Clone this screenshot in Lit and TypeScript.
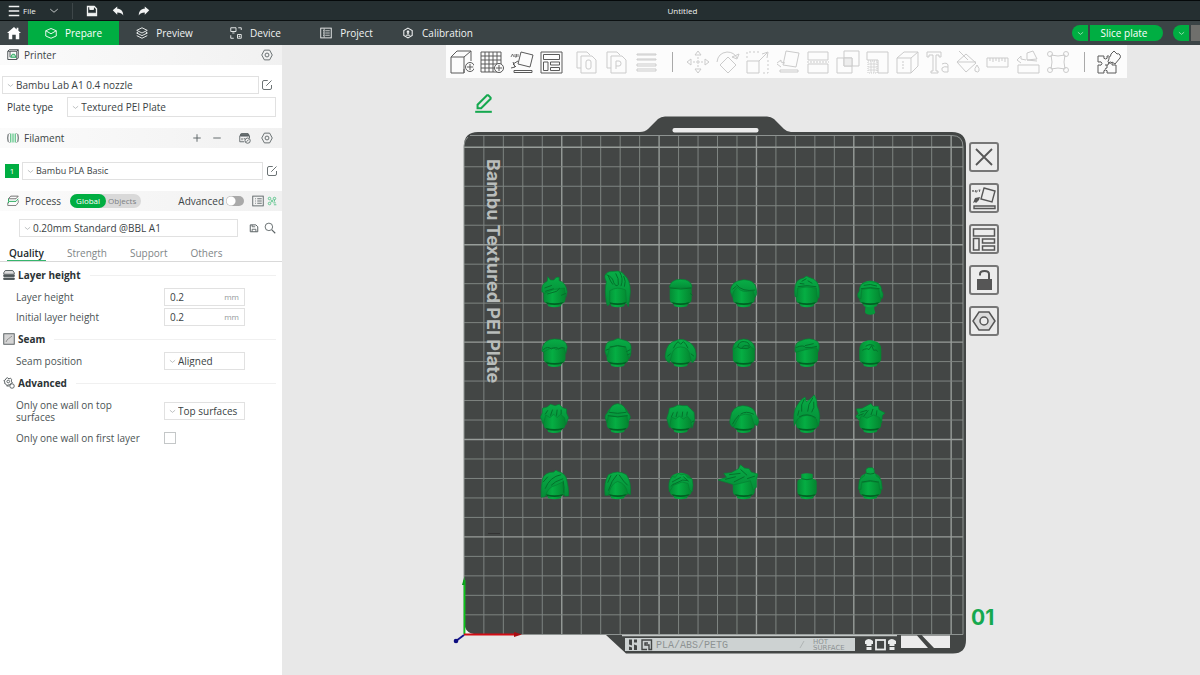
import { LitElement, html, svg, css, nothing, TemplateResult } from "lit";
import { customElement, state } from "lit/decorators.js";
import { classMap } from "lit/directives/class-map.js";

/* ---------- icons ---------- */

const ICONS: Record<string, TemplateResult> = {
  menu: svg`<path d="M1 2h14M1 8h14M1 14h14" stroke-width="1.8"/>`,
  chevron: svg`<path d="M2 5l6 5 6-5"/>`,
  save: svg`<path d="M2 2h9l3 3v9H2z" stroke-width="1.8"/><path d="M5 2v4h5V2z" fill="currentColor"/><path d="M3 11h10v3H3z" fill="currentColor"/>`,
  saveLine: svg`<path d="M2 3h9l3 3v8H2z" stroke-width="1.6"/><path d="M5 3v3h5M5 14v-4h6v4" stroke-width="1.4"/>`,
  undo: svg`<path d="M1 7l6-5v3c5 0 8 3 8 9-2-3-4-4-8-4v3z" fill="currentColor" stroke="none"/>`,
  redo: svg`<path d="M15 7L9 2v3c-5 0-8 3-8 9 2-3 4-4 8-4v3z" fill="currentColor" stroke="none"/>`,
  home: svg`<path d="M8 1L0 8h2v7h4v-5h4v5h4V8h2l-3-2.600V2h-2v2z" fill="currentColor" stroke="none"/>`,
  prepare: svg`<path d="M8 2l7 3v7l-7 3-7-3V5z"/><path d="M1 5l7 4 7-4"/>`,
  preview: svg`<path d="M8 1l7 3.500L8 8 1 4.500z"/><path d="M1 8l7 3.500L15 8M1 11.500L8 15l7-3.500M3 6.500L1 8l2 1M13 6.500L15 8l-2 1"/>`,
  device: svg`<path d="M1 1h7v5H1zM3 8h3M10 10h5v5h-5zM12 12h1v1h-1z"/><path d="M11 1h4v3M1 11v4h4"/>`,
  project: svg`<rect x="1" y="1.500" width="14" height="13"/><path d="M4 5h1.500M7 5h6M4 8h1.500M7 8h6M4 11h1.500M7 11h6M5.500 2v12" stroke-width="1"/>`,
  calibration: svg`<path d="M8 1.500l5.600 3.200v6.600L8 14.500l-5.600-3.200V4.700z" stroke-width="1.400"/><path d="M8 4l2.500 3h-1.500v3H7V7H5.500z" fill="currentColor" stroke="none"/><path d="M5 11h6"/>`,
  nut: svg`<path d="M4.500 1.500h7L15 8l-3.500 6.500h-7L1 8z"/><circle cx="8" cy="8" r="2.600"/>`,
  printer: svg`<path d="M1 3l2-2h12v11l-2 2H1z"/><path d="M4 3v8M15 1l-2 2v11M1 3h12"/><path d="M5 11l2-4h3l2 4z" stroke="#18a552" fill="#b9e3c9"/>`,
  spool: svg`<path d="M3 2Q1 2 1 8t2 6M13 2q2 0 2 6t-2 6"/><path d="M5 2v12M8 2v12M11 2v12" stroke="#4fbf7c" stroke-width="1.500"/>`,
  plus: svg`<path d="M8 2v12M2 8h12" stroke-width="1.500"/>`,
  minus: svg`<path d="M2 8h12" stroke-width="1.500"/>`,
  ams: svg`<path d="M3 2h9l1 3H2zM1 5h13v3M1 5v8h6M4 8v3M7 8v2"/><path d="M2 3h11v2H2z" fill="currentColor"/><circle cx="11.500" cy="11.500" r="3.500"/><path d="M10 13l3-3"/>`,
  edit: svg`<path d="M9 2H4Q2 2 2 4v8q0 2 2 2h8q2 0 2-2V8"/><path d="M7 9l7-7"/>`,
  layers: svg`<path d="M5 1.500h10l-3 3.500H2z" stroke="#666"/><path d="M2 5v3.500h10L15 5M2 9v2" stroke="#18a552"/><path d="M1 10v4h11l3-4V7" stroke="#777"/>`,
  list: svg`<rect x="1" y="1.500" width="14" height="13"/><path d="M4 5h1M7 5h6M4 8h1M7 8h6M4 11h1M7 11h6"/>`,
  nodes: svg`<g stroke="#3cba76"><circle cx="4" cy="4" r="2"/><circle cx="12" cy="4" r="2"/><circle cx="8" cy="8" r="1.500"/><circle cx="4" cy="12" r="2"/><path d="M10 11h4M11 14h4M12 6v3"/></g>`,
  search: svg`<circle cx="6.500" cy="6.500" r="5"/><path d="M10.500 10.500L15 15" stroke-width="1.500"/>`,
  stack: svg`<path d="M3 2h10l2 3v2H1V5z" fill="#ddd"/><path d="M1 8h14v2H1zM1 12h14v2H1z" fill="currentColor"/>`,
  seam: svg`<rect x="1" y="1" width="14" height="14" fill="#d5d5d5"/><path d="M4 12c1-4 5-5 8-8" stroke="#888"/>`,
  gears: svg`<path d="M6 1l2 1.500 2-1 1.500 2-.5 2 1.500 2-2 1-1 2H7l-2 1-1-2-2-1 .5-2L1 5l2-1 1-2z"/><circle cx="7" cy="6" r="1.800"/><circle cx="12" cy="12" r="3"/><path d="M8 12H5"/>`,
  pencil: svg`<path d="M3 12V9l8-8h1l2 2v1l-8 8z" stroke-width="1.700"/><path d="M1 15h14" stroke-width="1.700"/>`,
};

/* Toolbar artwork, drawn on a 24-unit grid. */
const TOOLS: Record<string, TemplateResult> = {
  addCube: svg`<path d="M1 7h13v16H1zM1 7l6-6h14l-7 6M21 1v10M14 23v-4"/><circle cx="20" cy="17" r="4.500" fill="#fcfcfc"/><path d="M20 14v6M17 17h6"/>`,
  addPlate: svg`<path d="M1 2h20v20H1zM5 2v20M9 2v20M13 2v20M17 2v20M1 6h20M1 10h20M1 14h20M1 18h20"/><circle cx="19" cy="18" r="4.500" fill="#fcfcfc"/><path d="M19 15v6M16 18h6"/>`,
  orient: svg`<path d="M11 2l12 3-3 12-12-3zM4 20.500h18v2H4z"/><path d="M1 7l1.500-3L4 7M5 4v3h1.500V4M8 4v3" stroke-width=".8"/><path d="M8 11L3 14l3 3M1 18l4-1-2-5"/>`,
  arrange: svg`<path d="M1 2h21v21H1zM3.500 4.500h16v5h-16zM3.500 12h4.500v8.500H3.500zM10.500 12h9v3h-9zM10.500 17.500h9v3h-9z"/>`,
  copy: svg`<path d="M6 18H2V2h10l3 3"/><path d="M6 6h11l4 4v13H6z"/><rect x="11" y="10" width="5" height="9" rx="2"/>`,
  paste: svg`<path d="M6 18H2V2h10l3 3"/><path d="M6 6h11l4 4v13H6z"/><path d="M11 19v-8h3q2 0 2 2.500T14 16h-3"/>`,
  lines: svg`<path d="M2 4h19v1H2zM2 9h19v1H2zM2 14h19v2H2zM2 19h19v2H2z"/>`,
  move: svg`<path d="M12 1l3 4h-6zM12 23l3-4h-6zM1 12l4-3v6zM23 12l-4-3v6z"/><circle cx="12" cy="12" r="1.200"/><path d="M12 7v2M12 15v2M7 12h2M15 12h2"/>`,
  rotate: svg`<path d="M12 7l8 8-8 8-8-8z"/><path d="M1 12Q2 3 11 2q7 0 10 6M23 4l-2 5-5-2z"/>`,
  scale: svg`<path d="M1 11h12v12H1zM13 11l8-8M16 4l6-2-1 6"/><path d="M1 8V2h12M22 10v13h-7" stroke-dasharray="2 2"/>`,
  lay: svg`<path d="M10 1l13 2-3 14-13-2zM4 20h18v2H4zM1 13l4-3v2l4 1M1 14l4 3"/>`,
  cut: svg`<path d="M2 2h20v8H2zM2 14h20v9H2z"/><path d="M1 12h22" stroke-dasharray="2 1"/>`,
  bool: svg`<path d="M1 8h15v15H1zM8 1h15v15H8z"/><path d="M8 8h8v8H8z" fill="#ededed"/>`,
  support: svg`<path d="M1 2h21v21H12V10H1z"/><path d="M2 11h9v12H2z" stroke-dasharray="1 1"/><path d="M2 14h9M2 17h9M2 20h9M5 11v12M8 11v12" stroke-width=".7"/>`,
  cube: svg`<path d="M1 8h14v15H1zM1 8l7-6h14v14l-7 7M15 8l7-6"/><path d="M7 11v9" stroke-dasharray="2 1"/>`,
  text: svg`<path d="M1 2h14v5h-2V5h-3v16h2v2H5v-2h2V5H3v2H1z"/><path d="M16 14q5-2 6 1v7h-4q-3-1-2-4 2-2 6-1"/>`,
  paint: svg`<path d="M3 1l9 9M10 4l10 9-10 9-9-10z"/><path d="M1 12h19M21 15q3 4 2 6t-4 0q-1-2 2-6z"/>`,
  measure: svg`<path d="M1 8h21v9H1zM4 8v3M7 8v4M10 8v3M13 8v4M16 8v3M19 8v4"/>`,
  assemble: svg`<path d="M2 15h21v8H2zM11 3l6-2 4 8-10 1zM1 10l4-4v3l5 1M1 10l4 3M11 10l10 1"/>`,
  mesh: svg`<path d="M5 5q7 2 14 0-2 7 0 14-7-2-14 0 2-7 0-14z"/><circle cx="4" cy="4" r="2.500"/><circle cx="20" cy="4" r="2.500"/><circle cx="4" cy="20" r="2.500"/><circle cx="20" cy="20" r="2.500"/>`,
  puzzle: svg`<path d="M1 6h6q-1 3 1.500 3T10 6h2M1 6v6q4-1 4 1.500T1 15v8h6q-1-3 1.500-3t1.500 3h9v-8h-4q1-3-1.500-3T11 15H8M10 15v3q-2 0-2 1.500"/><path d="M12 7q2 0 2-3l3-3 3 3q2-1 3 1t0 3l-5 6-3-2q-1 2-3 1t0-4z"/>`,
  close: svg`<path d="M4 4l16 16M20 4L4 20" stroke-width="1.800"/>`,
  orientPlate: svg`<path d="M12 2l11 3-3 11-11-3zM2 20h21v2.500H2z" stroke-width="1.400"/><path d="M0 6l1-2 1 2M3.500 4v2H5V4M6.500 4h2M7.500 4v2" stroke-width=".8"/><path d="M8 11l-5 1-2 5 2-1 1 1 3-3z" fill="currentColor" stroke="none"/>`,
  arrangePlate: svg`<path d="M1.500 2h21v7h-21zM1.500 11.500h5.500V23H1.500zM10.500 12h12v4h-12zM10.500 19h12v4h-12z" stroke-width="1.500"/>`,
  lock: svg`<path d="M5 11h15v11H5z" fill="currentColor" stroke="none"/><path d="M8 7.500V6q0-3 4.500-3T17 6v5" stroke-width="2"/>`,
  plateNut: svg`<path d="M7 3h10l6 9-6 9H7L1 12z" stroke-width="1.500" fill="#dcdcdc"/><circle cx="12" cy="12" r="4" stroke-width="1.500" fill="#ececec"/>`,
};

const icon = (name: string, size = 12) => html`<svg
  width=${size} height=${size} viewBox="0 0 16 16" fill="none" stroke="currentColor"
  stroke-width="1.2" aria-hidden="true">${ICONS[name]}</svg>`;

const tool = (name: string, size = 24) => html`<svg
  width=${size} height=${size} viewBox="0 0 24 24" fill="none" stroke="currentColor"
  stroke-width="1" aria-hidden="true">${TOOLS[name]}</svg>`;

const reset = css`
  * { box-sizing: border-box; }
  svg { display: block; flex: none; }
  button {
    border: 0; padding: 0; margin: 0; background: none; color: inherit; font: inherit;
    display: inline-flex; align-items: center; justify-content: center; cursor: pointer;
  }
`;

/* ---------- header ---------- */

@customElement("app-header")
class AppHeader extends LitElement {
  @state() private tab = "Prepare";

  static styles = [reset, css`
    :host { display: block; color: #f1f3f3; }
    .title {
      display: grid; grid-template-columns: 4fr auto 3fr; align-items: center;
      height: 21px; padding: 0 8px; background: #252f31;
      border-top: 1px solid #05090a; border-bottom: 1px solid #0c1112;
      font-size: 8px; line-height: 12px;
    }
    .left { display: flex; align-items: center; }
    .file { gap: 3px; }
    .drop { margin-left: 13px; }
    .rule { width: 1px; height: 16px; margin: 0 13px 0 13px; background: #3e4749; }
    .quick { display: flex; gap: 14px; }
    .name { margin: 0; font-size: 8px; font-weight: 400; line-height: 12px; }
    .bar { display: flex; align-items: center; height: 24px; background: #3b4446; overflow: hidden; }
    .home { width: 28px; height: 24px; color: #fff; }
    .tab { width: 91px; height: 24px; gap: 8px; font-size: 10px; line-height: 14px; }
    .tab.on { background: #00ae42; color: #fff; }
    .actions { display: flex; gap: 10px; margin-left: auto; }
    .split { display: flex; gap: 2px; }
    .split button { height: 16px; background: #00ae42; color: #fff; font-size: 10px; line-height: 14px; }
    .split .more { width: 16px; border-radius: 8px 0 0 8px; }
    .split .go { width: 73px; padding-right: 5px; border-radius: 0 8px 8px 0; }
    .split .off { width: 9px; background: #6f6f6c; }
  `];

  render() {
    const tabs = [["Prepare", "prepare"], ["Preview", "preview"], ["Device", "device"], ["Project", "project"], ["Calibration", "calibration"]];
    return html`
      <header class="title">
        <div class="left">
          <button class="file">${icon("menu", 12)}File</button>
          <button class="drop" aria-label="More menus">${icon("chevron", 10)}</button>
          <span class="rule"></span>
          <div class="quick">
            <button aria-label="Save">${icon("save", 12)}</button>
            <button aria-label="Undo">${icon("undo", 12)}</button>
            <button aria-label="Redo">${icon("redo", 12)}</button>
          </div>
        </div>
        <h1 class="name">Untitled</h1>
      </header>
      <nav class="bar">
        <button class="home" aria-label="Home">${icon("home", 14)}</button>
        ${tabs.map(([label, glyph]) => html`<button
          class=${classMap({ tab: true, on: this.tab === label })}
          @click=${() => (this.tab = label)}>${icon(glyph, 12)}${label}</button>`)}
        <div class="actions">
          <div class="split">
            <button class="more" aria-label="Slice options">${icon("chevron", 7)}</button>
            <button class="go">Slice plate</button>
          </div>
          <div class="split">
            <button class="more" aria-label="Print options">${icon("chevron", 7)}</button>
            <button class="off" aria-label="Print plate" disabled></button>
          </div>
        </div>
      </nav>`;
  }
}

/* ---------- settings panel ---------- */

@customElement("settings-panel")
class SettingsPanel extends LitElement {
  @state() private page = "Quality";

  static styles = [reset, css`
    :host { display: block; width: 282px; flex: none; background: #fff; color: #323a3c; font-size: 10px; line-height: 14px; }
    .head {
      display: flex; align-items: center; height: 20px; padding: 0 9px 0 7px; gap: 5px;
      background: linear-gradient(90deg, #fbfbfb, #f1f1f1); color: #3c4446;
    }
    .head h2 { margin: 0; font-size: 10px; font-weight: 400; line-height: 14px; }
    .head .end { display: flex; align-items: center; gap: 10px; margin-left: auto; }
    .head .tight { gap: 3px; margin-right: -4px; }
    .head button, .line button { color: #5b6365; }
    .head .ams { margin-left: 7px; }
    .filament { margin-top: 11px; }
    .process { margin-top: 11px; gap: 6px; }
    .line { display: flex; align-items: center; gap: 2px; }
    .printer { margin-top: 11px; padding: 0 9px 0 2px; }
    .plate { margin-top: 3px; padding: 0 6px 0 7px; gap: 14px; }
    .material { margin-top: 14px; padding: 0 4px 0 5px; gap: 3px; font-size: 9px; }
    .preset { margin-top: 8px; padding: 0 6px 0 19px; gap: 5px; }
    .preset button:first-of-type { margin-left: 6px; }
    .pick {
      display: flex; flex: 1; align-items: center; gap: 2px; height: 18px; padding: 0 4px;
      border: 1px solid #e1e1e1; color: #868c8e;
    }
    .plate .pick { height: 20px; }
    .pick select {
      flex: 1; min-width: 0; appearance: none; border: 0; padding: 0; margin: 0; background: none;
      color: #3a4244; font: inherit; text-overflow: clip;
    }
    .line .swatch { width: 14px; height: 14px; background: #00ae42; color: #fff; font-size: 8px; }
    .head .scope { display: flex; margin-left: 3px; border-radius: 7px; background: #d9d9d9; font-size: 8px; line-height: 14px; }
    .head .scope button { padding: 0 5px 0 2px; height: 14px; color: #7b8082; line-height: 14px; }
    .head .scope .on { padding: 0 6px; border-radius: 7px; background: #00ae42; color: #fff; }
    .switch { display: flex; align-items: center; gap: 2px; margin-right: 5px; }
    .switch input {
      appearance: none; width: 18px; height: 10px; margin: 0; border-radius: 5px;
      background: radial-gradient(circle at 5px 5px, #fff 4px, #a9a9a9 5px);
    }
    .pages { display: flex; align-items: stretch; height: 25px; padding-left: 7px; gap: 19px; border-bottom: 1px solid #d9d9d9; }
    .pages button { padding: 9px 2px 0; height: 24px; border-bottom: 1px solid transparent; color: #808587; line-height: 14px; }
    .pages .on { border-color: #35b56c; color: #222a2c; font-weight: 600; }
    .group { display: flex; align-items: center; gap: 3px; height: 18px; margin: 4px 0; padding: 0 6px 0 3px; color: #50585a; }
    .group h3 { margin: 0; font-size: 10px; font-weight: 700; line-height: 14px; color: #2b3335; }
    .group::after { content: ""; flex: 1; height: 1px; margin-left: 6px; background: #f0f0f0; }
    .rows { display: grid; gap: 2px; }
    .rows.loose { gap: 6px; padding-top: 3px; }
    .row { display: grid; grid-template-columns: 128px 81px; gap: 20px; align-items: center; min-height: 18px; padding-left: 16px; line-height: 12px; color: #4b5355; }
    .row label { width: 128px; white-space: normal; }
    .row .wide { white-space: nowrap; }
    .num { display: flex; align-items: center; height: 18px; padding: 0 5px; border: 1px solid #e1e1e1; color: #93989a; font-size: 8px; }
    .num input { flex: 1; min-width: 0; border: 0; padding: 0; background: none; font: inherit; font-size: 10px; line-height: 14px; color: #3a4244; }
    .check { appearance: none; width: 12px; height: 12px; margin: 0; border: 1px solid #c4c7c8; background: #fff; }
  `];

  private pick(id: string, value: string, label?: string) {
    return html`<div class="pick">${icon("chevron", 7)}
      <select id=${id} aria-label=${label ?? nothing}><option>${value}</option></select></div>`;
  }

  private num(id: string, label: string) {
    return html`<div class="row"><label for=${id}>${label}</label>
      <div class="num"><input id=${id} type="text" value="0.2">mm</div></div>`;
  }

  render() {
    return html`
      <section>
        <div class="head">${icon("printer", 12)}<h2>Printer</h2>
          <div class="end"><button aria-label="Printer settings">${icon("nut", 12)}</button></div></div>
        <div class="line printer">${this.pick("printer", "Bambu Lab A1 0.4 nozzle", "Printer")}
          <button aria-label="Edit printer">${icon("edit", 12)}</button></div>
        <div class="line plate"><label for="plate">Plate type</label>${this.pick("plate", "Textured PEI Plate")}</div>
      </section>
      <section>
        <div class="head filament">${icon("spool", 12)}<h2>Filament</h2>
          <div class="end">
            <button aria-label="Add filament">${icon("plus", 10)}</button>
            <button aria-label="Remove filament">${icon("minus", 10)}</button>
            <button class="ams" aria-label="Sync filaments">${icon("ams", 12)}</button>
            <button aria-label="Filament settings">${icon("nut", 12)}</button>
          </div></div>
        <div class="line material"><button class="swatch">1</button>${this.pick("filament", "Bambu PLA Basic", "Filament")}
          <button aria-label="Edit filament">${icon("edit", 12)}</button></div>
      </section>
      <section>
        <div class="head process">${icon("layers", 12)}<h2>Process</h2>
          <div class="scope"><button class="on">Global</button><button>Objects</button></div>
          <div class="end tight">
            <label class="switch">Advanced<input type="checkbox" role="switch"></label>
            <button aria-label="Setting list">${icon("list", 12)}</button>
            <button aria-label="Compare presets">${icon("nodes", 10)}</button>
          </div></div>
        <div class="line preset">${this.pick("preset", "0.20mm Standard @BBL A1", "Process preset")}
          <button aria-label="Save preset">${icon("saveLine", 10)}</button>
          <button aria-label="Search settings">${icon("search", 12)}</button></div>
        <div class="pages">${["Quality", "Strength", "Support", "Others"].map((p) => html`<button
          class=${classMap({ on: this.page === p })} @click=${() => (this.page = p)}>${p}</button>`)}</div>
        <div class="group">${icon("stack", 12)}<h3>Layer height</h3></div>
        <div class="rows">${this.num("layer", "Layer height")}${this.num("initial", "Initial layer height")}</div>
        <div class="group">${icon("seam", 12)}<h3>Seam</h3></div>
        <div class="rows">
          <div class="row"><label for="seam">Seam position</label>${this.pick("seam", "Aligned")}</div>
        </div>
        <div class="group">${icon("gears", 12)}<h3>Advanced</h3></div>
        <div class="rows loose">
          <div class="row"><label for="top">Only one wall on top surfaces</label>${this.pick("top", "Top surfaces")}</div>
          <div class="row"><label class="wide" for="first">Only one wall on first layer</label><input class="check" id="first" type="checkbox"></div>
        </div>
      </section>`;
  }
}

/* ---------- build plate ---------- */

interface Head { hair?: string; lines?: string; tail?: string; plain?: boolean; }

const SKULL = "M-33-48Q-34-76 0-78Q34-76 33-48V-24Q33-12 22-9L19-1Q0 5-19-1L-22-9Q-33-12-33-24Z";
const STUD = "M-17-60V-74Q0-78 17-74V-60Q29-58 29-50V-20Q28-11 21-9L18-1Q0 5-18-1L-21-9Q-28-11-29-20V-50Q-29-58-17-60Z";

const COLUMNS = [554.5, 617.7, 680.7, 743.8, 807, 870.3];
const ROWS = [306.7, 366.3, 432.3, 498.7];

const HEADS: Head[] = [
  { hair: "M-38-45Q-40-70-22-76L-20-90L-12-80L-2-80Q5-92 14-88L14-78Q34-74 38-45L34-28L30-56L0-52L-30-40Z", lines: "M-28-46L-2-54M-22-38L6-46L16-56M-30-56L-8-64M20-34L34-40" },
  { hair: "M-30-2L-34-12Q-40-50-34-75Q-42-90-36-98Q-28-108-10-106Q10-110 20-95Q38-80 38-45Q36-20 32 0L26-12L24-50Q0-62-24-48L-24-8Z", lines: "M-34-96Q-15-90-12-72Q-5-58 2-66Q4-85-6-100M6-104Q18-85 10-62M-28-92Q-22-75-14-66M18-92Q26-76 20-60" },
  { hair: "M-34-58Q-30-82 0-82Q32-82 34-58Q0-52-34-58Z", lines: "M-32-56Q0-50 32-56M28-40L36-34" },
  { hair: "M-40-45Q-40-78 0-81Q36-80 38-50Q42-40 34-28L28-48Q-10-40-18-58Q-34-50-34-28Z", lines: "M-22-66Q-5-44 34-50M-34-52L-22-62" },
  { hair: "M-36-30Q-40-60-30-76Q-22-84-10-86Q-2-96 6-88Q22-84 30-74Q40-60 36-25L30-30L28-56Q0-62-28-56L-30-30Z", lines: "M-28-60Q0-66 28-60M-16-76L-2-84M2-78L16-70M-22-70L-8-68" },
  { hair: "M-36-26Q-42-38-32-48Q-34-74 0-75Q34-74 34-48Q42-38 36-24L28-30L26-52Q0-58-26-52L-28-24Z", lines: "M-28-54Q0-60 28-54M-20-64Q0-70 20-62", tail: "M-14-4H12Q10 10 15 18Q12 24 0 24Q-14 24-16 16Z" },
  { hair: "M-38-46Q-36-80 0-82Q36-82 38-58L34-38L30-52Q15-58 5-50Q-5-60-20-50L-34-42Z", lines: "M-34-50Q-20-62-10-52Q5-60 12-52Q22-60 32-54" },
  { hair: "M-32-28Q-42-45-36-60Q-34-76-12-78Q0-88 14-80Q38-76 40-60Q42-35 34-22L24-58Q0-66-24-56Z", lines: "M-24-58Q0-66 24-58M-36-48L-26-52M26-44L38-50M28-34L38-38" },
  { hair: "M-34-10Q-50-20-46-36Q-42-72-12-78Q0-84 14-78Q44-66 46-38Q48-18 34-10L28-30Q26-58 0-58Q-24-58-28-30Z", lines: "M-22-54Q-16-68-8-74M22-54Q16-68 8-74M-8-74L0-66L8-74M-40-30L-30-38M40-30L30-38" },
  { hair: "M-34-50Q-30-80 0-82Q30-80 34-50L20-58Q0-48-20-58Z", lines: "M-18-60Q-14-76 2-74Q18-72 16-60Q0-66-4-56M-20-60Q-10-50 0-54Q14-50 20-60" },
  { hair: "M-36-46Q-38-70-20-76Q10-90 32-74Q40-64 34-44L28-56Q-10-50-34-42Z", lines: "M-34-56Q-10-66-4-56Q12-54 30-60M-6-62L20-68" },
  { lines: "M-24-48Q-10-56-4-50L4-62L10-48Q20-52 22-44M-14-60Q0-70 12-60" },
  { hair: "M-34-24L-42-46L-36-60L-36-72L-22-76L-12-84L2-80L14-84L24-74L36-70L36-58L42-44L34-22L30-44L18-54L8-44L-2-54L-14-44L-26-52Z", lines: "M-28-54L-20-66M-12-50L-6-68M6-50L8-68M20-54L20-68" },
  { hair: "M-38-44Q-38-56-26-62Q-20-85 0-86Q20-85 26-62Q38-56 38-44L30-28L28-50Q0-44-28-50L-32-28Z", lines: "M-26-60Q0-54 26-60M-30-50Q0-42 30-50" },
  { hair: "M-34-14L-42-42L-36-60L-34-72L-20-76L-8-82L6-80L20-80L30-70L40-60L42-36L34-12L30-36L20-48L8-40L-4-48L-16-40L-28-46Z", lines: "M-28-46L-22-60M-14-46L-10-62M4-46L6-62M18-50L20-62M32-30L40-34" },
  { hair: "M-34-16Q-46-24-40-44Q-36-78-4-80Q32-80 38-50Q50-36 40-20L30-26L22-52Q4-58-12-50L-30-18Z", lines: "M-14-52Q-26-40-34-24M-10-54Q6-66 30-54" },
  { hair: "M-38-20Q-44-60-30-80Q-20-98-6-106L-2-92Q12-100 22-112Q32-95 30-80Q44-50 34-18L28-40Q0-62-28-40Z", lines: "M-16-62Q-20-84-8-100M2-62Q2-84 18-104M14-60Q24-74 20-92M-28-50L-24-66M-24-46Q0-60 26-44" },
  { hair: "M-34-36L-44-48L-36-56L-42-70L-24-72L-10-80L2-86L8-78L24-78L26-68L44-58L36-50L34-28L28-44L10-52L-10-42L-26-50Z", lines: "M-30-60L-10-66M-20-48L-6-66M2-52L8-70M18-50L20-66M-36-50L-20-56" },
  { hair: "M-40-4Q-42-30-36-60Q-28-80-2-80Q4-90 10-82Q36-76 38-50Q44-25 42-8L30-8L24-50L4-40Q-20-36-28-6Z", lines: "M20-72Q-14-66-28-30M26-60Q0-52-10-40M26-54Q30-34 28-18M-34-50L-20-66" },
  { hair: "M-38-10Q-42-50-28-72Q0-88 26-72Q42-50 38-12L30-16Q26-44 0-52Q-22-44-28-10Z", lines: "M-2-72Q-18-56-28-24M4-72Q18-50 30-40M-20-70L-30-48" },
  { hair: "M-34-20Q-40-50-26-66L-16-64L-8-76L2-72L12-74L20-64L34-60Q40-40 34-20L26-28L22-46L4-50L-22-40Z", lines: "M-26-50L0-64M-24-42L6-56L22-54M-30-36L-22-44M8-66L24-52" },
  { hair: "M-30-42L-50-48L-77-56L-52-64L-60-76L-38-78L-16-90L-10-102L2-92L16-90L22-80L42-74L38-56L38-34L28-26L20-54L-10-46Z", lines: "M-56-58L-24-66M-44-72L-10-76M-30-50L2-66M-10-88L10-70M10-60L34-68" },
  { plain: true },
  { hair: "M-34-44Q-34-60-18-68Q-18-74-12-78Q-16-90-6-93H6Q14-90 12-78Q18-74 18-68Q34-60 34-44L36-28L28-28L26-48Q0-56-26-48L-28-28L-36-28Z", lines: "M-12-76Q0-72 12-76M-26-50Q0-58 26-50" },
];

@customElement("build-plate")
class BuildPlate extends LitElement {
  static styles = [reset, css`
    :host { display: block; }
    .thin { stroke: #7e8481; stroke-width: 1; }
    .bold { stroke: #989d9a; stroke-width: 1.400; }
    .brand { fill: #b9bdbb; font: 700 18px Inter, sans-serif; }
    .strip { fill: #8d9393; font: 10px "Liberation Mono", monospace; }
    .tiny { fill: #8d9393; font: 7px "DejaVu Sans", sans-serif; }
  `];

  private head(h: Head, i: number) {
    const x = COLUMNS[i % 6];
    const y = ROWS[Math.floor(i / 6)];
    return svg`<g transform="translate(${x} ${y}) scale(.3333)">
      ${h.tail ? svg`<path d=${h.tail} fill="#05983a"/>` : nothing}
      <path d=${h.plain ? STUD : SKULL} fill="url(#face)"/>
      <path d="M-27-14Q0-6 27-14L22-8Q0-2-22-8Z" fill="#035f24"/>
      ${h.hair ? svg`<path d=${h.hair} fill="url(#hair)" stroke="#047f30" stroke-width="2"/>` : nothing}
      ${h.lines ? svg`<path d=${h.lines} fill="none" stroke="#04702b" stroke-width="3"/>` : nothing}
      ${h.plain ? svg`<path d="M-17-60Q0-54 17-60" fill="none" stroke="#04702b" stroke-width="3"/>` : nothing}
    </g>`;
  }

  render() {
    const steps = Array.from({ length: 25 }, (_, i) => i + 1);
    return html`<svg width="518" height="544" viewBox="450 113 518 544" role="img" aria-label="Build plate with 24 objects">
      <defs>
        <linearGradient id="face"><stop offset="0" stop-color="#048a34"/><stop offset=".4" stop-color="#05ae43"/><stop offset="1" stop-color="#04842f"/></linearGradient>
        <linearGradient id="hair" x2="0" y2="1"><stop offset="0" stop-color="#08ad46"/><stop offset="1" stop-color="#048c37"/></linearGradient>
        <clipPath id="bed"><path d="M464 634V146Q464 135 475 135H952Q963 135 963 146V634Z"/></clipPath>
      </defs>
      <path fill="#434645" d="M464 634V146Q464 132 478 132H640Q645 132 648 129L658 119Q661 116.500 665 116.500H767Q771 116.500 774 119L784 129Q787 132 791 132H952Q966 132 966 146V640Q966 653.500 953 653.500H626L606 635Z"/>
      <rect x="672.500" y="128" width="86" height="4.500" rx="2" fill="#ececec"/>
      <g clip-path="url(#bed)">
        ${steps.map((n) => svg`<path class=${n % 5 ? "thin" : "bold"} d="M${464.4 + n * 19.47} 135V634"/>`)}
        ${steps.map((n) => svg`<path class=${n % 5 ? "thin" : "bold"} d="M464 ${634.3 - n * 19.48}H963"/>`)}
      </g>
      <path d="M470 135.500H952Q963 135.500 963 147V634.500H464V146Q464 140 468 137" fill="none" stroke="#8e9391"/>
      <path d="M622 635.500H897" stroke="#c4c8c7" stroke-width="1.500"/>
      <path d="M465 634V627Q467 633 474 634Z" fill="#f4f4f4"/>
      <text class="brand" transform="translate(487 159) rotate(90)">Bambu Textured PEI Plate</text>
      <path d="M488 533.500H500" stroke="#333"/>

      <rect x="625" y="638" width="230" height="13" fill="#cdd2d2"/>
      <path fill="#434645" d="M629 639.500h3v6l-3-1zM634 639.500h3v3h-3zM629 646.500l3 1v2.500h-3zM634 644.500l3 1v4.500h-3z"/>
      <path fill="none" stroke="#434645" stroke-width="1.400" d="M647 649.500H642V640h9.500v9.500H649V645h-4v-2h3"/>
      <text class="strip" x="656" y="648">PLA/ABS/PETG</text>
      <path d="M800 648L804 641" stroke="#b0b5b5"/>
      <text class="tiny" x="813" y="644">HOT</text>
      <text class="tiny" x="813" y="650">SURFACE</text>
      <g fill="#e9ebeb"><path d="M865 641q3.500-4 8 0v3h-1.500v6h-5v-6H865zM888 641q3.500-4 8 0v3h-1.500v6h-5v-6H888z"/><path d="M866 646.500h6M889 646.500h6" stroke="#434645"/></g>
      <rect x="876" y="640" width="9" height="9.500" fill="none" stroke="#e9ebeb" stroke-width="1.800"/>
      <path fill="#ececec" d="M901 635.500H917L928 648H901ZM922 635.500H950V648H934Z"/>

      ${HEADS.map((h, i) => this.head(h, i))}

      <path d="M464.500 634V580" stroke="#0cc51a" stroke-width="1.800"/><path d="M462 585l2.500-9v9z" fill="#0a9a1a"/>
      <path d="M464 634.500H516" stroke="#d10d15" stroke-width="1.800"/><path d="M514 632l8 2.500-8 2.500z" fill="#a80c12"/>
      <path d="M464 635L456 641" stroke="#17178c" stroke-width="1.800"/><circle cx="456" cy="641" r="2.300" fill="#0d0d80"/>
    </svg>`;
  }
}

/* ---------- 3D view ---------- */

@customElement("plate-view")
class PlateView extends LitElement {
  static styles = [reset, css`
    :host { display: block; flex: 1; min-width: 0; background: #e8e8e8; padding-left: 164px; }
    .tools { display: flex; align-items: center; width: max-content; height: 33px; padding: 0 3px 0 1px; background: #fcfcfc; color: #5a5a5a; }
    .tools button { width: 30px; height: 32px; }
    .tools button:disabled { color: #cbcbcb; }
    .set { display: flex; }
    .set + .set { margin-left: 5px; }
    .sep { width: 1px; height: 20px; margin: 0 10px; background: #a9a9a9; }
    .sep.last { margin: 0 9px 0 11px; }
    .rename { display: flex; align-items: end; height: 35px; padding-left: 28px; color: #15a84f; }
    .scene { display: flex; gap: 1px; padding-left: 4px; }
    .side { display: flex; flex-direction: column; gap: 11px; padding: 29px 0 25px; color: #565656; }
    .side button { width: 30px; height: 30px; border: 2px solid #777; border-radius: 3px; background: #ececec; }
    .number { margin-top: auto; padding-left: 2px; color: #15a84f; font-family: Inter, sans-serif; font-size: 21px; font-weight: 700; line-height: 28px; }
  `];

  private set(names: string[][], off = false) {
    return html`<div class="set">${names.map(([n, label]) => html`<button aria-label=${label} ?disabled=${off}>${tool(n)}</button>`)}</div>`;
  }

  render() {
    return html`
      <div class="tools" role="toolbar" aria-label="Editing tools">
        ${this.set([["addCube", "Add object"], ["addPlate", "Add plate"], ["orient", "Auto orient"], ["arrange", "Arrange all"]])}
        ${this.set([["copy", "Split to objects"], ["paste", "Split to parts"], ["lines", "Variable layer height"]], true)}
        <span class="sep"></span>
        ${this.set([["move", "Move"], ["rotate", "Rotate"], ["scale", "Scale"], ["lay", "Lay on face"], ["cut", "Cut"], ["bool", "Mesh boolean"],
          ["support", "Support painting"], ["cube", "Seam painting"], ["text", "Text shape"], ["paint", "Color painting"],
          ["measure", "Measure"], ["assemble", "Assemble"], ["mesh", "Brim ears"]], true)}
        <span class="sep last"></span>
        ${this.set([["puzzle", "Assembly view"]])}
      </div>
      <div class="rename"><button aria-label="Rename plate">${icon("pencil", 19)}</button></div>
      <div class="scene">
        <build-plate></build-plate>
        <div class="side">
          <button aria-label="Remove plate">${tool("close")}</button>
          <button aria-label="Orient plate">${tool("orientPlate")}</button>
          <button aria-label="Arrange plate">${tool("arrangePlate")}</button>
          <button aria-label="Lock plate">${tool("lock")}</button>
          <button aria-label="Plate settings">${tool("plateNut")}</button>
          <div class="number">01</div>
        </div>
      </div>`;
  }
}

@customElement("app-root")
class AppRoot extends LitElement {
  static styles = css`
    :host { display: flex; flex-direction: column; min-height: 100vh; overflow: hidden; font-family: "Open Sans", "Noto Sans", sans-serif; }
    .body { display: flex; flex: 1; min-height: 0; }
  `;
  render() {
    return html`<app-header></app-header>
      <main class="body"><settings-panel></settings-panel><plate-view></plate-view></main>`;
  }
}
